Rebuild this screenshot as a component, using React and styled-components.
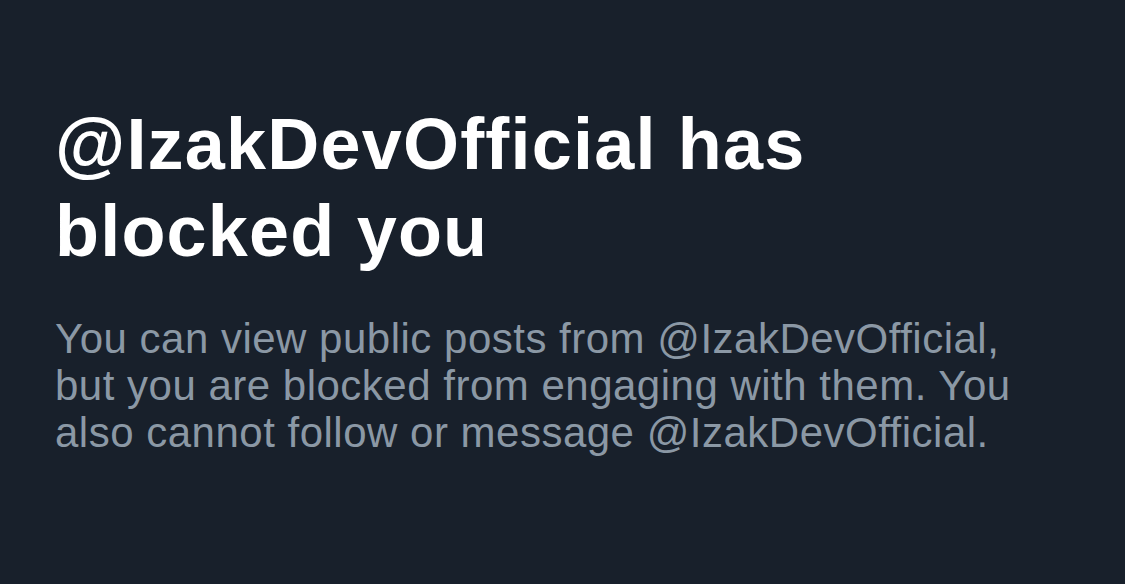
import React from "react";
import styled, { createGlobalStyle } from "styled-components";

const GlobalStyle = createGlobalStyle`
    html, body {
        margin: 0;
        padding: 0;
        background: #18202b;
    }
`;

const Container = styled.div`
    font-family: "Liberation Sans", Arial, sans-serif;
    background: #18202b;
    width: 1125px;
    height: 584px;
    box-sizing: border-box;
    padding: 101px 40px 0 55px;
    overflow: hidden;
`;

const Title = styled.h1`
    margin: 0;
    color: #ffffff;
    font-size: 72px;
    line-height: 87px;
    font-weight: 700;
    letter-spacing: 1.2px;
    white-space: nowrap;
`;

const Message = styled.p`
    margin: 40px 0 0;
    color: #8b98a5;
    font-size: 42px;
    line-height: 47px;
    font-weight: 400;
    letter-spacing: 0.5px;
    white-space: nowrap;
`;

const App = () => {
    return (
        <>
            <GlobalStyle />
            <Container>
                <Title>@IzakDevOfficial has<br />blocked you</Title>
                <Message>
                    You can view public posts from @IzakDevOfficial,<br />
                    but you are blocked from engaging with them. You<br />
                    also cannot follow or message @IzakDevOfficial.
                </Message>
            </Container>
        </>
    );
};

export default App;
